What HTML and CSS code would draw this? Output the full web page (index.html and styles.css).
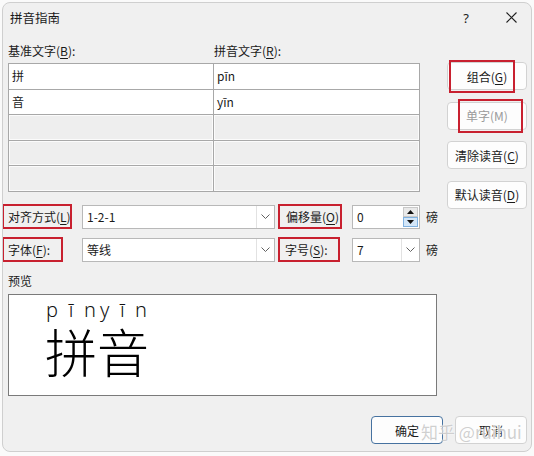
FILE: index.html
```html
<!DOCTYPE html>
<html lang="zh">
<head>
<meta charset="utf-8">
<title>拼音指南</title>
<link rel="stylesheet" href="styles.css">
</head>
<body>
<div class="window">
  <div class="titlebar">
    <span class="title">拼音指南</span>
    <span class="help">?</span>
    <span class="close"><svg width="11" height="11" viewBox="0 0 11 11"><path d="M0.5 0.5 L10.5 10.5 M10.5 0.5 L0.5 10.5" stroke="#222" stroke-width="1.1" fill="none"/></svg></span>
  </div>
  <div class="main">
    <div class="top">
      <div class="left">
        <div class="col-labels"><span>基准文字(<u>B</u>):</span><span>拼音文字(<u>R</u>):</span></div>
        <div class="grid">
          <div class="cell">拼</div><div class="cell">pīn</div>
          <div class="cell">音</div><div class="cell">yīn</div>
          <div class="cell empty"></div><div class="cell empty"></div>
          <div class="cell empty"></div><div class="cell empty"></div>
          <div class="cell empty"></div><div class="cell empty"></div>
        </div>
      </div>
      <div class="side">
        <div class="btn">组合(<u>G</u>)<span class="mark mark-g"></span></div>
        <div class="btn disabled">单字(M)<span class="mark mark-m"></span></div>
        <div class="btn">清除读音(<u>C</u>)</div>
        <div class="btn">默认读音(<u>D</u>)</div>
      </div>
    </div>

    <div class="controls">
      <span class="lbl lbl-l">对齐方式(<u>L</u>)</span>
      <div class="combo"><span class="val">1-2-1</span><span class="drop"><svg width="9" height="5" viewBox="0 0 9 5"><path d="M0.5 0.5 L4.5 4.5 L8.5 0.5" stroke="#606060" stroke-width="1" fill="none"/></svg></span></div>
      <span class="lbl lbl-o">偏移量(<u>O</u>)</span>
      <div class="combo spin"><span class="val">0</span><span class="spinbtns"><span class="up"><svg width="7" height="4" viewBox="0 0 7 4"><path d="M0 4 L3.5 0 L7 4 Z" fill="#111"/></svg></span><span class="down"><svg width="7" height="4" viewBox="0 0 7 4"><path d="M0 0 L3.5 4 L7 0 Z" fill="#111"/></svg></span></span></div>
      <span class="unit">磅</span>

      <span class="lbl lbl-f">字体(<u>F</u>):</span>
      <div class="combo"><span class="val">等线</span><span class="drop"><svg width="9" height="5" viewBox="0 0 9 5"><path d="M0.5 0.5 L4.5 4.5 L8.5 0.5" stroke="#606060" stroke-width="1" fill="none"/></svg></span></div>
      <span class="lbl lbl-s">字号(<u>S</u>):</span>
      <div class="combo"><span class="val">7</span><span class="drop"><svg width="9" height="5" viewBox="0 0 9 5"><path d="M0.5 0.5 L4.5 4.5 L8.5 0.5" stroke="#606060" stroke-width="1" fill="none"/></svg></span></div>
      <span class="unit">磅</span>
    </div>

    <div class="preview-label">预览</div>
    <div class="preview">
      <div class="ruby">
        <div class="syl"><div class="py"><span>p</span><span>ī</span><span>n</span></div><div class="hz">拼</div></div>
        <div class="syl"><div class="py"><span>y</span><span>ī</span><span>n</span></div><div class="hz">音</div></div>
      </div>
    </div>

    <div class="actions">
      <div class="btn wide primary">确定</div>
      <div class="btn wide">取消</div>
    </div>
  </div>
  <div class="watermark">知乎 @ruihui</div>
</div>
</body>
</html>
```
FILE: styles.css
```css
body {
  margin: 0;
  background: #fafafa;
  font-family: "Noto Sans CJK SC", "Noto Sans", sans-serif;
  font-size: 12px;
  color: #1a1a1a;
}
u { text-decoration: underline; text-underline-offset: 2px; }

.window {
  margin: 2px 0 0 2px;
  width: 530px;
  height: 450px;
  box-sizing: border-box;
  border: 1px solid #cfcfcf;
  border-radius: 8px;
  background: #f0f0f0;
  position: relative;
  overflow: hidden;
}

.titlebar {
  height: 29px;
  display: flex;
  align-items: center;
  padding-left: 7px;
}
.title { flex: 1; font-size: 12.5px; }
.help { font-family: "Noto Sans", sans-serif; font-size: 13px; margin-right: 32px; }
.close { width: 20px; margin-right: 10px; display: flex; justify-content: center; }

.main { padding: 0 4px 0 5px; }

.top { display: flex; height: 150px; margin-top: 10px; }
.left { width: 412px; }
.col-labels {
  display: grid;
  grid-template-columns: 206px 206px;
  height: 17px;
  line-height: 17px;
  margin-bottom: 4px;
}
.grid {
  display: grid;
  grid-template-columns: 204px 205px;
  grid-template-rows: repeat(5, 24.6px);
  gap: 1px;
  padding: 1px;
  background: #a8a8a8;
  width: fit-content;
}
.cell {
  background: #fff;
  padding-left: 3px;
  line-height: 24.6px;
}
.cell.empty { background: #eeeeee; box-shadow: inset 0 0 0 1px #fbfbfb; }

.side {
  margin-left: 27px;
  width: 80px;
  display: flex;
  flex-direction: column;
  gap: 11.5px;
  padding-top: 20px;
}
.btn {
  height: 28px;
  box-sizing: border-box;
  border: 1px solid #d2d2d2;
  border-radius: 4px;
  background: #fdfdfd;
  display: flex;
  align-items: center;
  justify-content: center;
  position: relative;
  flex-shrink: 0;
}
.btn.disabled { color: #9a9a9a; }
.mark { position: absolute; border: 2px solid #c8202f; box-sizing: border-box; }
.mark-g { left: 1px; top: -3px; width: 66px; height: 33px; }
.mark-m { left: 10px; top: -4px; width: 65px; height: 34px; }

.controls {
  display: grid;
  grid-template-columns: 80px 193px 77px 68px auto;
  grid-template-rows: 25px 25px;
  row-gap: 8px;
  margin: 12px 0 0 -6px;
  align-items: center;
}
.lbl {
  justify-self: start;
  box-sizing: border-box;
  height: 25px;
  line-height: 21px;
  border: 2px solid #c8202f;
  padding-left: 4px;
  white-space: nowrap;
}
.lbl-l { width: 70px; }
.lbl-f { width: 61px; }
.lbl-o { width: 64px; margin-left: 3px; padding-left: 6px; }
.lbl-s { width: 62px; margin-left: 3px; padding-left: 5px; }

.combo {
  height: 24px;
  box-sizing: border-box;
  border: 1px solid #b8b8b8;
  background: #fff;
  display: flex;
}
.combo .val { flex: 1; padding-left: 4px; line-height: 22px; }
.combo .drop {
  width: 17px;
  border-left: 1px solid #e2e2e2;
  display: flex;
  align-items: center;
  justify-content: center;
}
.spinbtns { width: 15px; display: flex; flex-direction: column; padding: 1px 1px 1px 0; }
.spinbtns span { flex: 1; display: flex; align-items: center; justify-content: center; box-sizing: border-box; }
.spinbtns .up { background: #e9e9e9; border: 1px solid #c8c8c8; }
.spinbtns .down { background: #d3e6f8; border: 1px solid #7fb1e0; }
.unit { padding-left: 6px; }

.preview-label { margin-top: 10px; height: 17px; line-height: 17px; }
.preview {
  margin-top: 5px;
  width: 429px;
  height: 102px;
  box-sizing: border-box;
  border: 1px solid #7a7a7a;
  background: #fff;
  padding: 5px 0 0 36px;
}
.ruby { display: flex; }
.syl { width: 52px; display: flex; flex-direction: column; }
.py {
  display: flex;
  justify-content: space-between;
  font-family: "Noto Sans", sans-serif;
  font-weight: 300;
  font-size: 20px;
  line-height: 20px;
  height: 20px;
  padding: 0 1px 0 1px;
  color: #111;
}
.syl + .syl .py { padding: 0 2px 0 3px; }
.hz { font-size: 52px; line-height: 46px; margin-top: 8px; color: #000; font-weight: 300; }

.actions { display: flex; justify-content: flex-end; gap: 12px; margin-top: 20px; }
.btn.wide { width: 72px; }
.btn.primary { border-color: #4672a0; }

.watermark {
  position: absolute;
  left: 418px;
  top: 419px;
  font-size: 17px;
  line-height: 20px;
  color: rgba(160, 160, 160, 0.5);
  text-shadow: 0 0 2px #fff, 0 0 1px #fff;
  white-space: nowrap;
  pointer-events: none;
}
```
